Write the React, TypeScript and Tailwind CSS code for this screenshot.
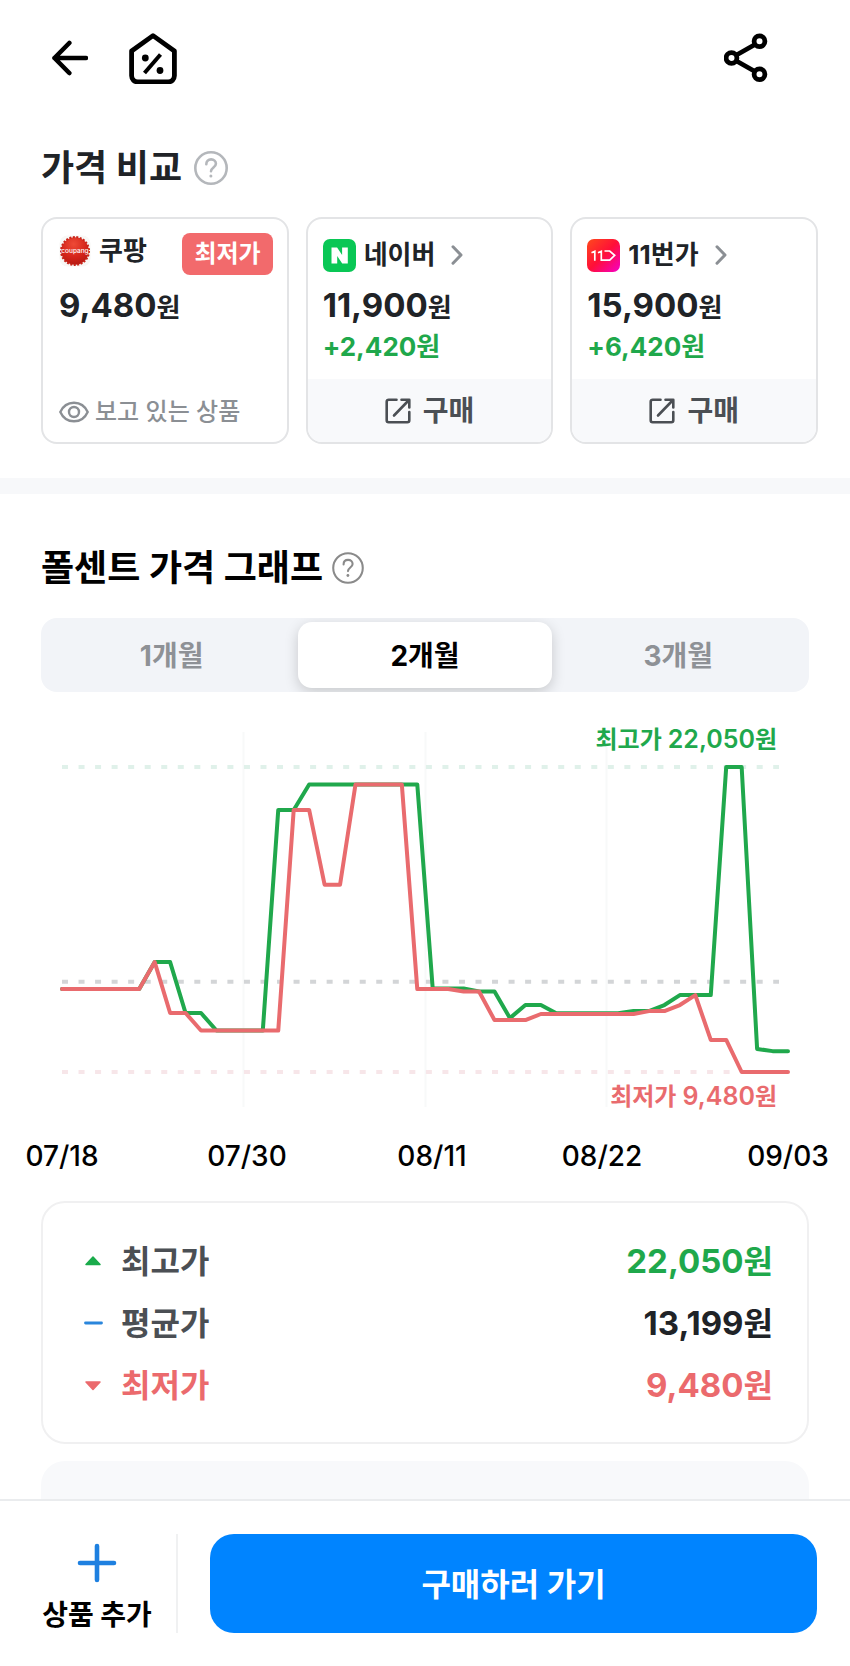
import { useState } from 'react';

type Point = [day: number, price: number];

const PERIODS = ['1개월', '2개월', '3개월'];

// price changes by day, day 0 is 07/18
const HIGHS: Point[] = [
  [0, 12900], [5, 12900], [6, 14010], [7, 14010], [8, 11910], [9, 11910], [10, 11190], [13, 11190],
  [14, 20280], [15, 20280], [16, 21330], [23, 21330], [24, 12920], [26, 12920], [27, 12800],
  [28, 12800], [29, 11700], [30, 12240], [31, 12240], [32, 11900], [36, 11900], [37, 11990],
  [38, 11990], [39, 12240], [40, 12650], [42, 12650], [43, 22050], [44, 22050], [45, 10430],
  [46, 10340], [47, 10340],
];

const LOWS: Point[] = [
  [0, 12900], [5, 12900], [6, 14010], [7, 11910], [8, 11910], [9, 11190], [14, 11190], [15, 20280],
  [16, 20280], [17, 17200], [18, 17200], [19, 21330], [22, 21330], [23, 12900], [25, 12900],
  [26, 12800], [27, 12800], [28, 11620], [30, 11620], [31, 11870], [37, 11870], [38, 11990],
  [39, 11990], [40, 12240], [41, 12650], [42, 10800], [43, 10800], [44, 9480], [47, 9480],
];

const MAX_PRICE = 22050;
const MIN_PRICE = 9480;
const AVG_PRICE = 13199;

const DATES = [
  { label: '07/18', x: 62 },
  { label: '07/30', x: 247 },
  { label: '08/11', x: 432 },
  { label: '08/22', x: 602 },
  { label: '09/03', x: 788 },
];

const toX = (day: number) => 62 + (day * 726) / 47;
const toY = (price: number) => 75 + ((MAX_PRICE - price) * 305) / (MAX_PRICE - MIN_PRICE);
const toPoints = (data: Point[]) => data.map(([day, price]) => `${toX(day)},${toY(price)}`).join(' ');

function BackIcon() {
  return (
    <svg className="w-9 h-9" viewBox="0 0 36 36" fill="none" stroke="currentColor" strokeWidth="4.6" strokeLinecap="round" strokeLinejoin="round">
      <path d="M34 18H2.500M17.300 3L2.500 18l14.800 15" />
    </svg>
  );
}

function HomeIcon() {
  return (
    <svg className="w-12 h-[52px]" viewBox="0 0 48 52" fill="none" stroke="currentColor" strokeLinecap="round" strokeLinejoin="round">
      <path strokeWidth="4.8" d="M24 3.600L2.600 19V43.800a6.200 6.200 0 0 0 6.200 6.200h30.400a6.200 6.200 0 0 0 6.200-6.200V19z" />
      <path strokeWidth="4" d="M31.500 22.500L15.500 41" strokeLinecap="butt" />
      <circle cx="16.300" cy="26" r="3.400" fill="currentColor" stroke="none" />
      <circle cx="31" cy="38.500" r="3.400" fill="currentColor" stroke="none" />
    </svg>
  );
}

function ShareIcon() {
  return (
    <svg className="w-11 h-[50px]" viewBox="0 0 44 50" fill="none" stroke="currentColor" strokeWidth="4.800">
      <circle cx="7.500" cy="25" r="5.400" />
      <circle cx="35.500" cy="8.300" r="5.400" />
      <circle cx="35.500" cy="41.300" r="5.400" />
      <path d="M12.500 22l18.500-10.500M12.500 28l18.500 10.500" />
    </svg>
  );
}

function HelpIcon({ className }: { className: string }) {
  return (
    <svg className={className} viewBox="0 0 34 34" fill="none" stroke="currentColor" strokeLinecap="round">
      <circle cx="17" cy="17" r="15.700" />
      <path d="M12.300 13.200c0-2.900 2-4.800 4.800-4.800s4.800 1.800 4.800 4.300c0 3.700-4.900 3.800-4.900 7.600" />
      <circle cx="16.900" cy="25" r="1.500" fill="currentColor" stroke="none" />
    </svg>
  );
}

function CoupangLogo() {
  return (
    <svg className="w-8 h-8" viewBox="0 0 32 32">
      <defs>
        <radialGradient id="coupang" cx="0.45" cy="0.25" r="0.8">
          <stop offset="0" stopColor="#ee4a36" />
          <stop offset="0.600" stopColor="#d4241a" />
          <stop offset="1" stopColor="#b01812" />
        </radialGradient>
      </defs>
      <rect x="0.500" y="0.500" width="31" height="31" rx="8" fill="#f8f8f6" />
      <circle cx="16" cy="16" r="13.800" fill="url(#coupang)" />
      <circle cx="16" cy="16" r="14" fill="none" stroke="#c8241a" strokeWidth="2" strokeDasharray="2 1.520" />
      <text x="16" y="17.500" textAnchor="middle" fontSize="6.500" fontWeight="500" fill="#fff" className="font-['Inter']">coupang</text>
    </svg>
  );
}

function NaverLogo() {
  return (
    <svg className="w-[33px] h-[33px]" viewBox="0 0 33 33">
      <rect width="33" height="33" rx="7" fill="#09c755" />
      <path d="M8.500 8.500h5.600l5 7.500V8.500h5.700v16h-5.600l-5-7.500v7.500H8.500z" fill="#fff" />
    </svg>
  );
}

function ElevenLogo() {
  return (
    <svg className="w-[33px] h-[33px]" viewBox="0 0 33 33" fill="none">
      <defs>
        <linearGradient id="eleven" x1="0" y1="0" x2="1" y2="1">
          <stop offset="0" stopColor="#ff4a1c" />
          <stop offset="0.500" stopColor="#ff0f38" />
          <stop offset="1" stopColor="#f500c8" />
        </linearGradient>
      </defs>
      <rect width="33" height="33" rx="7" fill="url(#eleven)" />
      <path d="M4.500 13.800L7.800 12.300V21.800M11 13.800l3.300-1.500v8.900h8.400l5-4.800-5-4.400h-5.200" stroke="#fff" strokeWidth="1.700" />
    </svg>
  );
}

function EyeIcon() {
  return (
    <svg className="w-[30px] h-[22px]" viewBox="0 0 30 22" fill="none" stroke="currentColor" strokeWidth="2.400">
      <path d="M1.300 11C4 5 9 1.700 15 1.700S26 5 28.700 11C26 17 21 20.300 15 20.300S4 17 1.300 11z" strokeLinejoin="round" />
      <circle cx="15" cy="11" r="5" />
    </svg>
  );
}

function OpenIcon() {
  return (
    <svg className="w-[26px] h-[26px]" viewBox="0 0 26 26" fill="none" stroke="currentColor" strokeWidth="2.600" strokeLinecap="round" strokeLinejoin="round">
      <path d="M11.500 1.700H3.700a2 2 0 0 0-2 2v18.600a2 2 0 0 0 2 2h18.600a2 2 0 0 0 2-2V14" />
      <path d="M16.500 1.700h7.800v7.800M24 2L9 17.500" />
    </svg>
  );
}

function ChevronIcon() {
  return (
    <svg className="w-3 h-5 text-[#8b8f94]" viewBox="0 0 12 20" fill="none" stroke="currentColor" strokeWidth="3" strokeLinecap="round" strokeLinejoin="round">
      <path d="M2 1.800L10 10l-8 8.200" />
    </svg>
  );
}

const OTHER_SHOPS = [
  { name: '네이버', price: '11,900', diff: '+2,420', logo: <NaverLogo /> },
  { name: '11번가', price: '15,900', diff: '+6,420', logo: <ElevenLogo /> },
];

const STATS = [
  {
    label: '최고가',
    value: '22,050',
    labelColor: 'text-[#4b4f54]',
    valueColor: 'text-[#1fa84b]',
    mark: <path d="M10 5L17 12.500H3z" fill="#1aab4b" stroke="#1aab4b" strokeWidth="1.500" strokeLinejoin="round" />,
  },
  {
    label: '평균가',
    value: '13,199',
    labelColor: 'text-[#4b4f54]',
    valueColor: 'text-[#202327]',
    mark: <path d="M2.500 9h16" stroke="#2a86dc" strokeWidth="2.800" strokeLinecap="round" />,
  },
  {
    label: '최저가',
    value: '9,480',
    labelColor: 'text-[#eb6a6d]',
    valueColor: 'text-[#eb6a6d]',
    mark: <path d="M10 13.500L17 6H3z" fill="#eb6a6d" stroke="#eb6a6d" strokeWidth="1.500" strokeLinejoin="round" />,
  },
];

function PriceChart() {
  return (
    <svg className="block w-full h-auto mb-5" viewBox="0 0 850 489" fill="none" role="img" aria-label="가격 그래프">
      {/* Grid */}
      <path d="M243.500 40v375M425.500 40v375M606.500 40v375" stroke="#f8f9f9" strokeWidth="2" />
      <g strokeWidth="4" strokeDasharray="6 10.540">
        <path d={`M62 ${toY(MAX_PRICE)}H779`} stroke="#e0f1ea" />
        <path d={`M62 ${toY(AVG_PRICE)}H779`} stroke="#d3d5d7" />
        <path d={`M62 ${toY(MIN_PRICE)}H779`} stroke="#f7e6e9" />
      </g>

      {/* Price lines */}
      <g strokeWidth="4" strokeLinecap="round" strokeLinejoin="round">
        <polyline points={toPoints(HIGHS)} stroke="#20a84c" />
        <polyline points={toPoints(LOWS)} stroke="#e96b6e" />
      </g>

      <g fontSize="24" fontWeight="600" textAnchor="end">
        <text x="777" y="56" fill="#20a84c">최고가 <tspan fontSize="25">22,050</tspan>원</text>
        <text x="777" y="413" fill="#e96b6e">최저가 <tspan fontSize="25">9,480</tspan>원</text>
      </g>

      <g fontSize="28" fontWeight="500" textAnchor="middle" fill="#000">
        {DATES.map((date) => (
          <text key={date.label} x={date.x} y="474">{date.label}</text>
        ))}
      </g>
    </svg>
  );
}

export default function App() {
  const [period, setPeriod] = useState('2개월');

  return (
    <div className="min-h-screen flex flex-col bg-white text-[#202327] font-['Inter','Noto_Sans_CJK_KR',sans-serif]">
      {/* Top bar */}
      <header className="h-[116px] pl-[52px] pr-[82px] flex items-center text-black">
        <button aria-label="뒤로" className="cursor-pointer"><BackIcon /></button>
        <button aria-label="홈" className="ml-[41px] cursor-pointer"><HomeIcon /></button>
        <button aria-label="공유" className="ml-auto cursor-pointer"><ShareIcon /></button>
      </header>

      {/* Price comparison */}
      <section className="pl-[41px] pr-8 pt-7 pb-[34px]">
        <div className="flex items-center gap-3">
          <h2 className="text-[36px] leading-[48px] font-bold">가격 비교</h2>
          <button aria-label="가격 비교 도움말" className="text-[#b4b7bb] cursor-pointer">
            <HelpIcon className="w-[34px] h-[34px] stroke-[2.6]" />
          </button>
        </div>

        <div className="mt-[25px] grid grid-cols-3 gap-[17px]">
          <article className="h-[227px] flex flex-col border-2 border-[#e3e4e6] rounded-2xl pl-4 pr-[14px] py-[14px]">
            <div className="h-[42px] flex justify-between">
              <div className="h-9 flex items-center gap-2">
                <CoupangLogo />
                <h3 className="text-[26px] leading-9 font-bold">쿠팡</h3>
              </div>
              <span className="px-3 h-[42px] leading-[42px] rounded-lg bg-[#f26a6c] text-white text-[24px] font-bold">최저가</span>
            </div>
            <p className="mt-[10px] text-[33px] leading-10 font-bold">9,480<span className="text-[26px]">원</span></p>
            <p className="mt-auto flex items-center gap-[6px] text-[24px] leading-8 font-medium text-[#8b8f94]">
              <EyeIcon />
              보고 있는 상품
            </p>
          </article>

          {OTHER_SHOPS.map((shop) => (
            <article key={shop.name} className="h-[227px] flex flex-col border-2 border-[#e3e4e6] rounded-2xl overflow-hidden">
              <div className="px-[15px] pt-[18px]">
                <a href="#" className="h-9 flex items-center gap-2">
                  {shop.logo}
                  <h3 className="text-[26px] leading-9 font-bold">{shop.name}</h3>
                  <span className="ml-2"><ChevronIcon /></span>
                </a>
                <p className="mt-3 text-[33px] leading-10 font-bold">{shop.price}<span className="text-[26px]">원</span></p>
                <p className="text-[26px] leading-[38px] font-bold text-[#1fa84b]">{shop.diff}<span className="text-[26px]">원</span></p>
              </div>
              <a href="#" className="mt-auto h-[63px] flex items-center justify-center gap-3 bg-[#f8f9fb] text-[#4b4f54] text-[28px] leading-10 font-bold">
                <OpenIcon />
                구매
              </a>
            </article>
          ))}
        </div>
      </section>

      <div className="h-4 bg-[#f7f8fa]" />

      {/* Price graph */}
      <section className="pt-[50px] text-black">
        <div className="px-[41px] flex items-center gap-[9px]">
          <h2 className="text-[36px] leading-[48px] font-bold">폴센트 가격 그래프</h2>
          <button aria-label="가격 그래프 도움말" className="text-[#8a8a8a] cursor-pointer">
            <HelpIcon className="w-8 h-8 stroke-[2.2]" />
          </button>
        </div>

        <div className="mx-[41px] mt-[26px] h-[74px] grid grid-cols-3 rounded-2xl bg-[#f2f4f8] p-1 overflow-hidden">
          {PERIODS.map((item) => (
            <button
              key={item}
              aria-pressed={item === period}
              onClick={() => setPeriod(item)}
              className={`rounded-[14px] pt-[2px] text-[28px] leading-9 font-bold cursor-pointer ${
                item === period ? 'bg-white text-black shadow-[0_4px_14px_rgba(0,0,0,0.18)]' : 'text-[#8e9196]'
              }`}
            >
              {item}
            </button>
          ))}
        </div>

        <PriceChart />

        <dl className="mx-[41px] h-[243px] flex flex-col justify-center border-2 border-[#f0f0f1] rounded-3xl pt-[2px] pl-10 pr-[34px]">
          {STATS.map((stat) => (
            <div key={stat.label} className="h-[62px] flex items-center text-[32px] leading-10 font-bold">
              <svg className="w-5 h-5 mr-[18px]" viewBox="0 0 20 20">{stat.mark}</svg>
              <dt className={stat.labelColor}>{stat.label}</dt>
              <dd className={`ml-auto ${stat.valueColor}`}><span className="text-[33px]">{stat.value}</span>원</dd>
            </div>
          ))}
        </dl>

        <div className="mx-[41px] mt-[17px] h-[38px] rounded-t-3xl bg-[#f8f9fb]" />
      </section>

      {/* Bottom actions */}
      <footer className="flex-1 flex items-start border-t-2 border-[#eaecee] pt-[33px] pb-[33px] pr-[33px]">
        <button className="w-[178px] h-[99px] pl-[18px] flex flex-col items-center justify-between border-r-2 border-[#f0f1f2] text-black cursor-pointer">
          <svg className="w-10 h-10 mt-[9px]" viewBox="0 0 40 40" stroke="#1e80e0" strokeWidth="4.600" strokeLinecap="round">
            <path d="M20 3v34M3 20h34" />
          </svg>
          <span className="text-[28px] leading-9 font-bold">상품 추가</span>
        </button>
        <button className="ml-8 h-[99px] flex-1 rounded-3xl bg-[#0084ff] pt-[2px] text-white text-[32px] font-bold cursor-pointer">
          구매하러 가기
        </button>
      </footer>
    </div>
  );
}
